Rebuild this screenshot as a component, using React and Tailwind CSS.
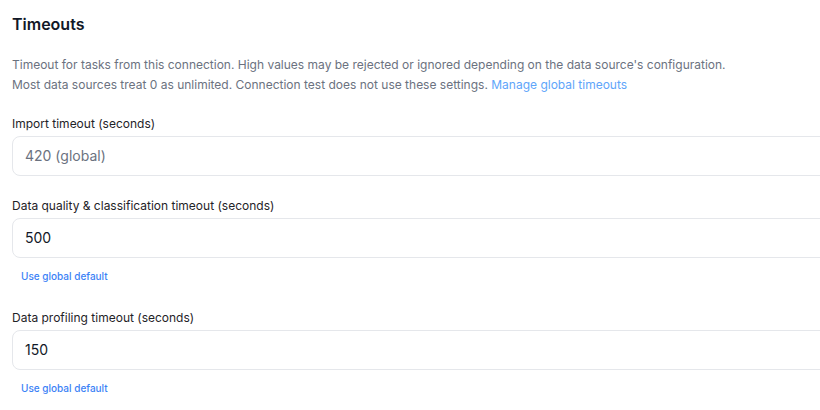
function Field({ label, value, placeholder, showDefault }) {
  return (
    <div className="flex flex-col">
      <label className="text-xs leading-4 text-[#1f2328]">{label}</label>
      <div className="mt-1 h-10 w-[calc(100%+24px)] rounded-lg border border-[#e5e7eb] bg-white flex items-center px-3">
        {value ? (
          <span className="text-sm text-[#111827]">{value}</span>
        ) : (
          <span className="text-sm text-[#6b7280]">{placeholder}</span>
        )}
      </div>
      {showDefault && (
        <button type="button" className="self-start mt-[11px] ml-[9px] text-[10px] leading-[14px] font-medium text-[#3b82f6]">
          Use global default
        </button>
      )}
    </div>
  )
}

function App() {
  return (
    <div className="w-[820px] h-[410px] overflow-hidden bg-white font-['Inter',sans-serif]">
      <div className="pl-3 pt-[13px]">
        <h2 className="text-base leading-[22px] font-semibold text-[#111827]">Timeouts</h2>
        <p className="mt-[20px] text-xs leading-5 text-[#6b7280]">
          Timeout for tasks from this connection. High values may be rejected or ignored depending on the data source's configuration.
          <br />
          Most data sources treat 0 as unlimited. Connection test does not use these settings.{' '}
          <a className="text-[#60a5fa]">Manage global timeouts</a>
        </p>

        <div className="mt-[21px] flex flex-col gap-[22px]">
          <Field label="Import timeout (seconds)" placeholder="420 (global)" />
          <Field label="Data quality & classification timeout (seconds)" value="500" showDefault />
        </div>
        <div className="mt-[27px]">
          <Field label="Data profiling timeout (seconds)" value="150" showDefault />
        </div>
      </div>
    </div>
  )
}

export default App
